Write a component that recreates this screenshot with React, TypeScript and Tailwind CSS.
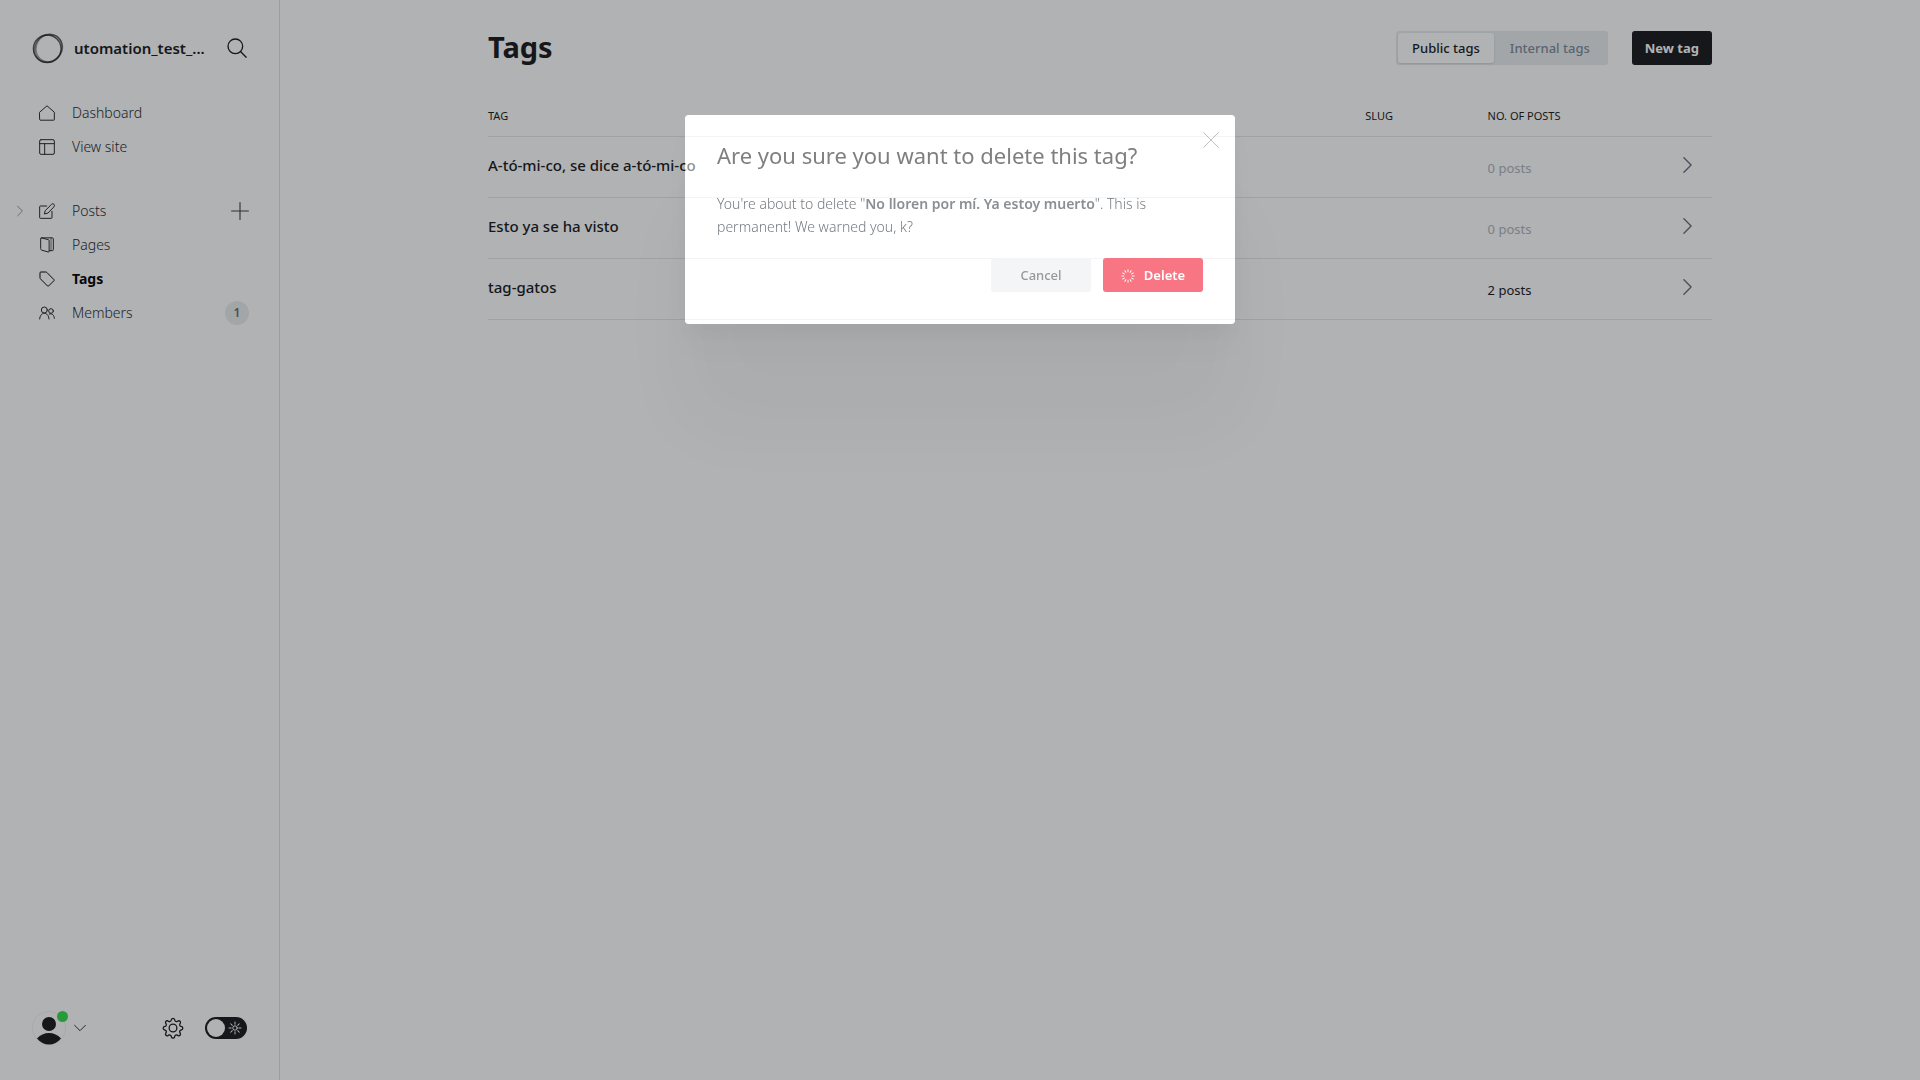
import type { ReactNode } from 'react';

const icon = {
  fill: 'none',
  stroke: 'currentColor',
  strokeWidth: 1.5,
  strokeLinecap: 'round' as const,
  strokeLinejoin: 'round' as const,
  viewBox: '0 0 24 24',
  'aria-hidden': true,
};

const HomeIcon = () => (
  <svg {...icon} className="size-4">
    <path d="M1 10.8 12 1.2l11 9.6V22a.8.8 0 0 1-.8.8H1.800A.8.8 0 0 1 1 22z" />
  </svg>
);

const SiteIcon = () => (
  <svg {...icon} className="size-4">
    <rect x="1" y="1" width="22" height="22" rx="2" />
    <path d="M1 7h22M8.500 7v16" />
  </svg>
);

const PostsIcon = () => (
  <svg {...icon} className="size-4">
    <path d="M19.500 12.500V22a1 1 0 0 1-1 1H2a1 1 0 0 1-1-1V5.500a1 1 0 0 1 1-1h9.500" />
    <path d="m13 15.200-5 1.300 1.300-5L18.800 2a2.600 2.600 0 0 1 3.700 3.700z" />
  </svg>
);

const PagesIcon = () => (
  <svg {...icon} className="size-4">
    <path d="M2.500 2.200A.9.9 0 0 1 3.600 1.300L14 4a1.500 1.500 0 0 1 1.200 1.500v16a1 1 0 0 1-1.300 1L4 19.700a2 2 0 0 1-1.500-2z" />
    <path d="M3.500 1.300H20a1.500 1.500 0 0 1 1.500 1.500V19a1.500 1.500 0 0 1-1.500 1.500h-4.500" />
    <path d="M18 1.500v18.500" strokeWidth="1" />
  </svg>
);

const TagIcon = () => (
  <svg {...icon} className="size-4">
    <path d="M1.500 2.500a1 1 0 0 1 1-1h7.800a2 2 0 0 1 1.400.6L22.500 13a1 1 0 0 1 0 1.400l-8.200 8.200a1 1 0 0 1-1.400 0L2.100 11.700a2 2 0 0 1-.6-1.400z" />
  </svg>
);

const MembersIcon = () => (
  <svg {...icon} className="size-4">
    <circle cx="8" cy="7.500" r="4.500" />
    <path d="M1 21c.3-5 3-8.500 7-8.500s6.700 3.500 7 8.500" />
    <circle cx="18" cy="9" r="3.500" />
    <path d="M15.500 13.500c4-1.500 7.300 1.500 7.500 6.500" />
  </svg>
);

const ChevronRight = ({ className }: { className: string }) => (
  <svg {...icon} viewBox="0 0 12 20" className={className}>
    <path d="m2 2 8 8-8 8" />
  </svg>
);

const Logo = () => (
  <svg viewBox="0 0 32 32" fill="none" className="size-8 shrink-0" aria-hidden="true">
    <circle cx="15.200" cy="16.800" r="13.800" stroke="#15171a" strokeWidth="1.300" opacity=".75" />
    <ellipse cx="17" cy="15.600" rx="13" ry="14" stroke="#15171a" strokeWidth="1.800" opacity=".4" transform="rotate(30 16 16)" />
    <ellipse cx="16" cy="16.400" rx="14.600" ry="13" stroke="#15171a" strokeWidth="1.500" opacity=".5" transform="rotate(-45 16 16)" />
  </svg>
);

const GearIcon = () => (
  <svg {...icon} strokeWidth="1.400" className="size-[22px]">
    <circle cx="12" cy="12" r="4.200" />
    <path d="M10.300 2.700a1.800 1.800 0 0 1 3.400 0l.3 1a1.900 1.900 0 0 0 2.700 1.100l.9-.5a1.800 1.800 0 0 1 2.400 2.400l-.5.9a1.900 1.900 0 0 0 1.100 2.700l.9.300a1.800 1.800 0 0 1 0 3.400l-.9.300a1.900 1.900 0 0 0-1.100 2.700l.5.900a1.800 1.800 0 0 1-2.400 2.400l-.9-.5a1.900 1.900 0 0 0-2.700 1.100l-.3.900a1.800 1.800 0 0 1-3.400 0l-.3-.9a1.900 1.900 0 0 0-2.700-1.100l-.9.500A1.800 1.800 0 0 1 4 17.900l.5-.9a1.900 1.900 0 0 0-1.100-2.700l-.9-.3a1.800 1.800 0 0 1 0-3.400l.9-.3a1.900 1.900 0 0 0 1.100-2.700L4 6.700a1.800 1.800 0 0 1 2.400-2.400l.9.500A1.900 1.900 0 0 0 10 3.700z" />
  </svg>
);

const rays = [0, 45, 90, 135, 180, 225, 270, 315];
const ticks = [0, 30, 60, 90, 120, 150, 180, 210, 240, 270, 300, 330];

type NavProps = { icon: ReactNode; label: string; active?: boolean; before?: ReactNode; after?: ReactNode };

const NavItem = ({ icon: glyph, label, active, before, after }: NavProps) => (
  <li className="relative flex h-[34px] items-center pr-[30px]">
    {before}
    <a
      href="#"
      className={
        active
          ? 'flex flex-1 items-center gap-[17px] pl-[39px] text-sm font-bold text-[#000]'
          : 'flex flex-1 items-center gap-[17px] pl-[39px] text-sm font-light text-[#23282d]'
      }
    >
      {glyph}
      {label}
    </a>
    {after}
  </li>
);

const Sidebar = () => (
  <aside className="flex w-[280px] shrink-0 flex-col border-r border-[#dde1e5]">
    <div className="flex items-center pt-8 pr-8 pl-8">
      <Logo />
      <span className="ml-[10px] flex-1 text-[15px] leading-5 font-semibold">utomation_test_...</span>
      <button type="button" aria-label="Search">
        <svg {...icon} strokeWidth="1.600" className="size-5">
          <circle cx="10" cy="10" r="8.800" />
          <path d="m16.500 16.500 6.500 6.500" />
        </svg>
      </button>
    </div>
    <nav className="mt-8">
      <ul>
        <NavItem icon={<HomeIcon />} label="Dashboard" />
        <NavItem icon={<SiteIcon />} label="View site" />
      </ul>
      <ul className="mt-[30px]">
        <NavItem
          icon={<PostsIcon />}
          label="Posts"
          before={
            <button type="button" aria-label="Expand posts" className="absolute left-4 text-[#7c8b9a]">
              <ChevronRight className="h-3 w-2" />
            </button>
          }
          after={
            <button type="button" aria-label="New post" className="text-[#394047]">
              <svg {...icon} className="size-[18px]">
                <path d="M12 .8v22.400M.8 12h22.400" />
              </svg>
            </button>
          }
        />
        <NavItem icon={<PagesIcon />} label="Pages" />
        <NavItem icon={<TagIcon />} label="Tags" active />
        <NavItem
          icon={<MembersIcon />}
          label="Members"
          after={
            <span className="flex size-6 items-center justify-center rounded-full bg-[#ebeef0] text-xs font-semibold text-[#626d79]">
              1
            </span>
          }
        />
      </ul>
    </nav>
    <div className="mt-auto flex items-center pr-8 pb-[35px] pl-8">
      <button type="button" aria-label="Account" className="flex items-center gap-2">
        <span className="relative">
          <svg viewBox="0 0 34 34" className="size-[34px]" aria-hidden="true">
            <circle cx="17" cy="17" r="16.500" fill="none" stroke="#f1f3f4" />
            <circle cx="17" cy="13" r="7" fill="#15171a" />
            <path d="M5 27.500Q10 22 17 22t12 5.500Q24 33.500 17 33.500T5 27.500z" fill="#15171a" />
          </svg>
          <span className="absolute top-0 -right-[2px] size-[11px] rounded-full bg-[#30dd47]" />
        </span>
        <svg {...icon} viewBox="0 0 20 12" className="h-2 w-3">
          <path d="m1 1.500 9 9 9-9" />
        </svg>
      </button>
      <button type="button" aria-label="Settings" className="ml-auto">
        <GearIcon />
      </button>
      <label className="relative ml-[21px] flex h-[22px] w-[42px] items-center justify-between rounded-full bg-[#15171a] px-[2px]">
        <input type="checkbox" aria-label="Dark mode" className="sr-only" />
        <span className="size-[18px] rounded-full bg-white" />
        <svg viewBox="0 0 14 14" className="mr-[3px] size-[14px]" fill="none" stroke="#fff" strokeLinecap="round" aria-hidden="true">
          <circle cx="7" cy="7" r="2.200" />
          {rays.map((a) => (
            <path key={a} d="M7 1v2.200" transform={`rotate(${a} 7 7)`} />
          ))}
        </svg>
      </label>
    </div>
  </aside>
);

const tags = [
  { name: 'A-tó-mi-co, se dice a-tó-mi-co', posts: 0 },
  { name: 'Esto ya se ha visto', posts: 0 },
  { name: 'tag-gatos', posts: 2 },
];

const TagTable = () => (
  <table className="w-full table-fixed text-left">
    <thead>
      <tr className="h-10 border-b border-[#e6e9eb] text-[11px] uppercase">
        <th className="font-normal">Tag</th>
        <th className="w-[10%] font-normal">Slug</th>
        <th className="w-[10%] font-normal whitespace-nowrap">No. of posts</th>
        <th aria-label="Open" className="w-[102px]" />
      </tr>
    </thead>
    <tbody>
      {tags.map((t) => (
        <tr key={t.name} className="h-[61px] border-b border-[#e6e9eb]">
          <td className="pb-1">
            <a href="#" className="text-[15px] font-medium">
              {t.name}
            </a>
          </td>
          <td />
          <td className={t.posts ? 'pt-1 text-[13px]' : 'pt-1 text-[13px] text-[#abb4be]'}>{t.posts} posts</td>
          <td className="pr-[19px] pb-1">
            <a href="#" aria-label={`Open ${t.name}`} className="flex justify-end text-[#626d79]">
              <ChevronRight className="h-[18px] w-[11px]" />
            </a>
          </td>
        </tr>
      ))}
    </tbody>
  </table>
);

const DeleteDialog = () => (
  <div className="fixed inset-0 flex items-start justify-center overflow-hidden pt-[115px]">
    <div
      role="dialog"
      aria-labelledby="dialog-title"
      className="relative w-[550px] rounded bg-white/50 px-8 pt-[27px] pb-8 shadow-[0_12px_12px_rgba(0,0,0,0.02),0_24px_30px_rgba(0,0,0,0.025),0_100px_80px_rgba(0,0,0,0.035),0_0_0_2000px_rgba(21,23,26,0.335)]"
    >
      <button type="button" aria-label="Close" className="absolute top-[17px] right-4 text-[#9b9fa3]">
        <svg {...icon} strokeWidth="1" className="size-4">
          <path d="m1 1 22 22M23 1 1 23" />
        </svg>
      </button>
      <h2 id="dialog-title" className="text-[22px] leading-[26px] text-[#7f7f80]">
        Are you sure you want to delete this tag?
      </h2>
      <p className="mt-6 text-sm leading-[23px] font-light text-[#747b81]">
        You're about to delete "<strong className="font-semibold text-[#8a8f94]">No lloren por mí. Ya estoy muerto</strong>". This is
        permanent! We warned you, k?
      </p>
      <div className="mt-5 flex justify-end gap-3 text-[13px]">
        <button type="button" className="h-[34px] w-[100px] rounded-[3px] bg-[#f4f5f6] pt-[2px] font-medium text-[#94999e]">
          Cancel
        </button>
        <button
          type="button"
          className="flex h-[34px] w-[100px] items-center justify-center gap-[9px] rounded-[3px] bg-[#f87583] pt-[2px] font-semibold text-white"
        >
          <svg viewBox="0 0 14 14" className="size-[14px]" stroke="#fff" strokeLinecap="round" aria-hidden="true">
            {ticks.map((a) => (
              <path key={a} d="M7 .8v2" transform={`rotate(${a} 7 7)`} />
            ))}
          </svg>
          Delete
        </button>
      </div>
    </div>
  </div>
);

export default function App() {
  return (
    <div className="flex min-h-screen bg-white font-['Noto_Sans',sans-serif] text-[#15171a]">
      <Sidebar />
      <main className="flex-1 px-12">
        <div className="mx-auto max-w-[1224px]">
          <header className="flex items-center pt-[31px]">
            <h1 className="pb-[2px] text-[29px] leading-8 font-bold">Tags</h1>
            <div className="ml-auto flex h-[34px] rounded-[3px] bg-[#ebeef0] p-[2px] text-[13px] font-medium">
              <button type="button" className="rounded-[3px] bg-white px-[14px] pt-[2px] shadow">
                Public tags
              </button>
              <button type="button" className="px-4 pt-[2px] text-[#7c8b9a]">
                Internal tags
              </button>
            </div>
            <button type="button" className="ml-6 h-[34px] rounded-[3px] bg-[#15171a] px-[13px] pt-[2px] text-[13px] font-bold text-white">
              New tag
            </button>
          </header>
          <section className="mt-[31px]">
            <TagTable />
          </section>
        </div>
      </main>
      <DeleteDialog />
    </div>
  );
}
